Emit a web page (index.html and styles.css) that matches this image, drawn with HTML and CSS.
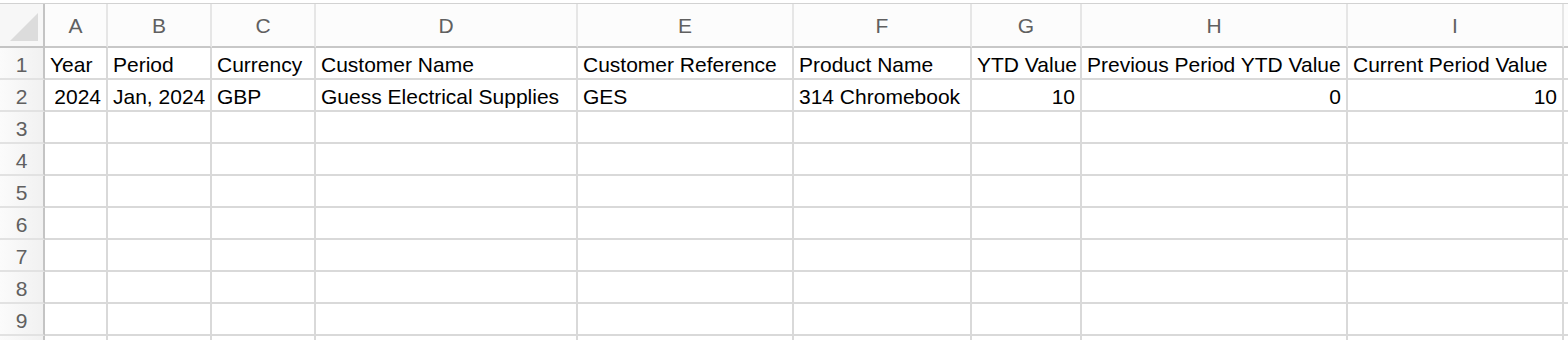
FILE: index.html
```html
<!DOCTYPE html>
<html lang="en">
<head>
<meta charset="utf-8">
<title>Sheet</title>
<link rel="stylesheet" href="styles.css">
</head>
<body>
<div class="sheet">
  <div class="corner"><svg class="corner-tri" width="32" height="32" viewBox="0 0 32 32"><polygon points="31,2 31,30 3,30" fill="#dcdcdc"/></svg></div>
  <div class="colhead">A</div>
  <div class="colhead">B</div>
  <div class="colhead">C</div>
  <div class="colhead">D</div>
  <div class="colhead">E</div>
  <div class="colhead">F</div>
  <div class="colhead">G</div>
  <div class="colhead">H</div>
  <div class="colhead">I</div>
  <div class="colhead colhead-last"></div>

  <div class="rowhead">1</div>
  <div class="cell">Year</div>
  <div class="cell">Period</div>
  <div class="cell">Currency</div>
  <div class="cell">Customer Name</div>
  <div class="cell">Customer Reference</div>
  <div class="cell">Product Name</div>
  <div class="cell">YTD Value</div>
  <div class="cell">Previous Period YTD Value</div>
  <div class="cell">Current Period Value</div>
  <div class="cell"></div>

  <div class="rowhead">2</div>
  <div class="cell num">2024</div>
  <div class="cell">Jan, 2024</div>
  <div class="cell">GBP</div>
  <div class="cell">Guess Electrical Supplies</div>
  <div class="cell">GES</div>
  <div class="cell">314 Chromebook</div>
  <div class="cell num">10</div>
  <div class="cell num">0</div>
  <div class="cell num">10</div>
  <div class="cell"></div>

  <div class="rowhead">3</div>
  <div class="cell"></div><div class="cell"></div><div class="cell"></div><div class="cell"></div><div class="cell"></div><div class="cell"></div><div class="cell"></div><div class="cell"></div><div class="cell"></div><div class="cell"></div>
  <div class="rowhead">4</div>
  <div class="cell"></div><div class="cell"></div><div class="cell"></div><div class="cell"></div><div class="cell"></div><div class="cell"></div><div class="cell"></div><div class="cell"></div><div class="cell"></div><div class="cell"></div>
  <div class="rowhead">5</div>
  <div class="cell"></div><div class="cell"></div><div class="cell"></div><div class="cell"></div><div class="cell"></div><div class="cell"></div><div class="cell"></div><div class="cell"></div><div class="cell"></div><div class="cell"></div>
  <div class="rowhead">6</div>
  <div class="cell"></div><div class="cell"></div><div class="cell"></div><div class="cell"></div><div class="cell"></div><div class="cell"></div><div class="cell"></div><div class="cell"></div><div class="cell"></div><div class="cell"></div>
  <div class="rowhead">7</div>
  <div class="cell"></div><div class="cell"></div><div class="cell"></div><div class="cell"></div><div class="cell"></div><div class="cell"></div><div class="cell"></div><div class="cell"></div><div class="cell"></div><div class="cell"></div>
  <div class="rowhead">8</div>
  <div class="cell"></div><div class="cell"></div><div class="cell"></div><div class="cell"></div><div class="cell"></div><div class="cell"></div><div class="cell"></div><div class="cell"></div><div class="cell"></div><div class="cell"></div>
  <div class="rowhead">9</div>
  <div class="cell"></div><div class="cell"></div><div class="cell"></div><div class="cell"></div><div class="cell"></div><div class="cell"></div><div class="cell"></div><div class="cell"></div><div class="cell"></div><div class="cell"></div>
  <div class="rowhead"></div>
  <div class="cell"></div><div class="cell"></div><div class="cell"></div><div class="cell"></div><div class="cell"></div><div class="cell"></div><div class="cell"></div><div class="cell"></div><div class="cell"></div><div class="cell"></div>
</div>
</body>
</html>
```

FILE: styles.css
```css
html, body {
  margin: 0;
  padding: 0;
  background: #ffffff;
  overflow: hidden;
  height: 340px;
}

body {
  font-family: "Liberation Sans", Arial, sans-serif;
  font-size: 21px;
  color: #000000;
}

.sheet {
  margin-top: 3px;
  border-top: 1px solid #d2d2d2;
  display: grid;
  grid-template-columns: 45px 63px 104px 104px 262px 216px 178px 110px 266px 216px 1fr;
  grid-auto-rows: 32px;
  grid-template-rows: 44px;
}

.corner {
  background: #f7f7f7;
  border-right: 2px solid #c4c4c4;
  border-bottom: 2px solid #c4c4c4;
  display: flex;
  align-items: flex-end;
  justify-content: flex-end;
  padding: 0 4px 3px 0;
}

.corner-tri {
  display: block;
}

.colhead {
  background: #fcfcfc;
  color: #606060;
  text-align: center;
  border-right: 2px solid #e6e6e6;
  border-bottom: 2px solid #c8c8c8;
  padding-top: 2px;
  line-height: 40px;
  white-space: nowrap;
  overflow: hidden;
}

.colhead-last {
  border-right: none;
}

.rowhead {
  background: linear-gradient(to right, #fbfbfb, #f1f1f1);
  color: #606060;
  text-align: center;
  border-right: 2px solid #c4c4c4;
  border-bottom: 2px solid #e2e2e2;
  padding-top: 4px;
  line-height: 26px;
}

.cell {
  border-right: 2px solid #d9d9d9;
  border-bottom: 2px solid #d9d9d9;
  padding: 4px 5px 0 5px;
  line-height: 26px;
  white-space: nowrap;
  overflow: hidden;
}

.num {
  text-align: right;
}
```
